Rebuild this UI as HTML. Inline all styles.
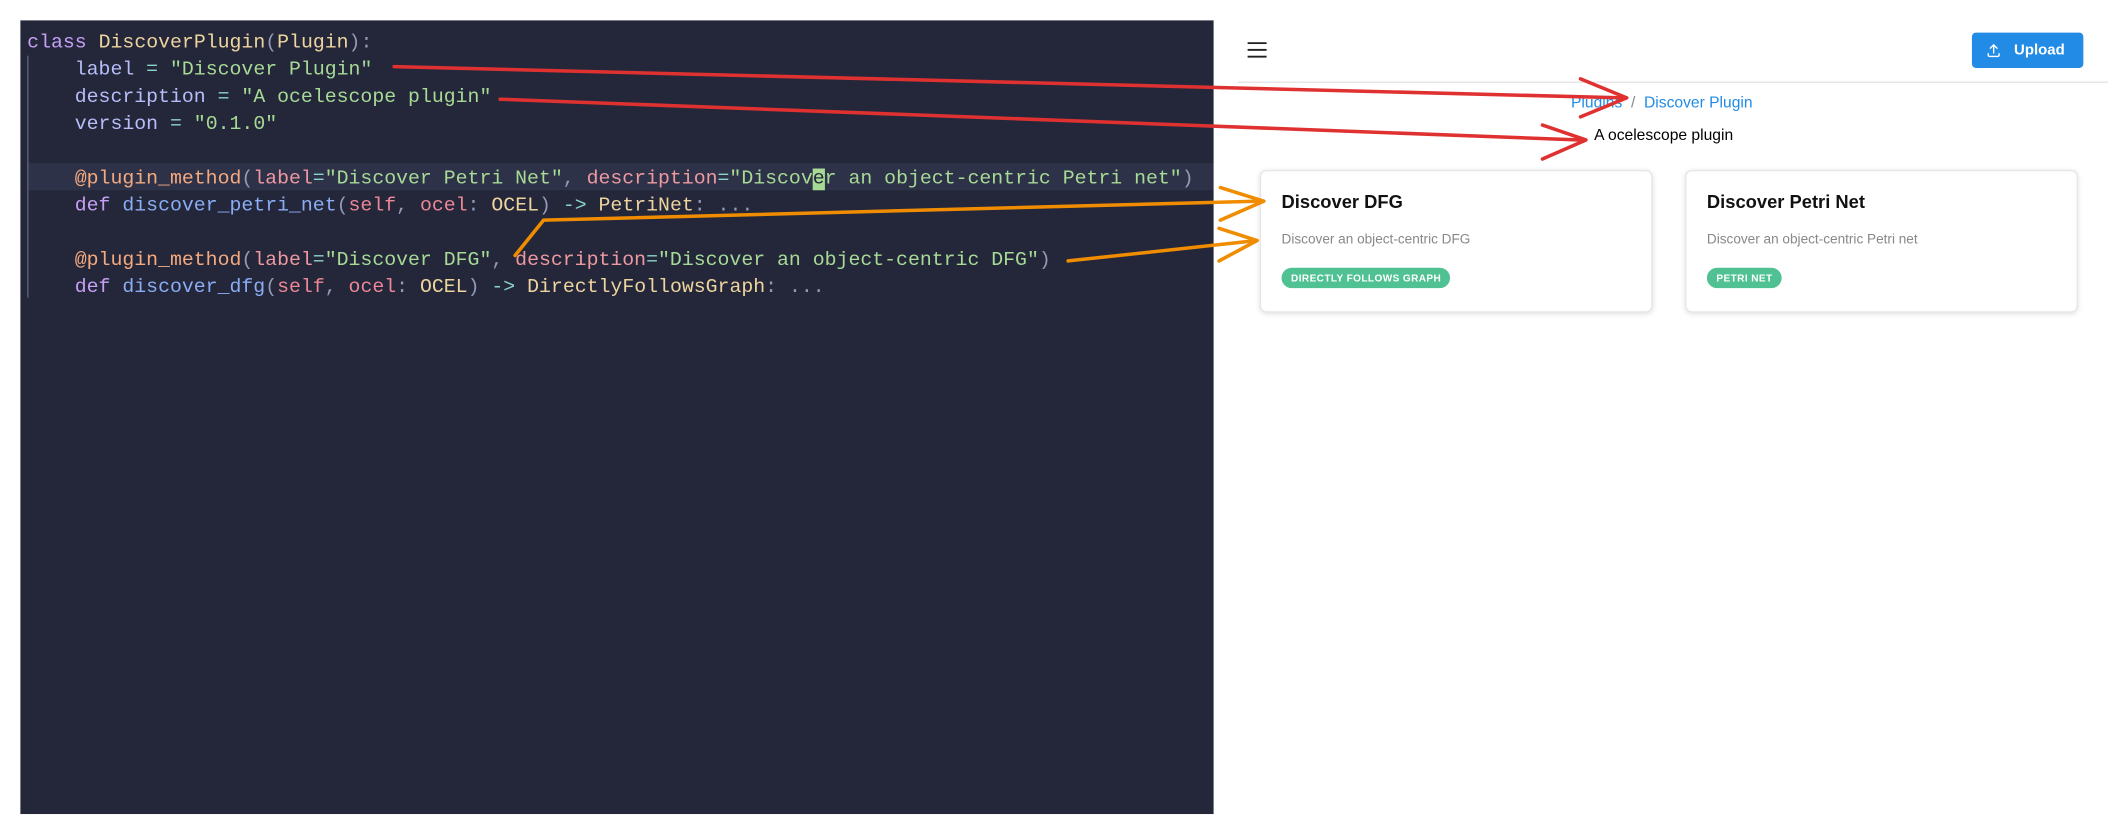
<!DOCTYPE html>
<html><head><meta charset="utf-8"><style>
html,body{margin:0;padding:0;background:#fff;width:2120px;height:830px;overflow:hidden}
#s{position:absolute;left:0;top:0;width:1560px;height:611px;transform:scale(1.359);transform-origin:0 0;font-family:"Liberation Sans",sans-serif}
#code{position:absolute;left:15px;top:15px;width:878px;height:584px;background:#24273a;overflow:hidden}
#code pre{margin:0;position:absolute;left:5px;top:7px;font-family:"Liberation Mono",monospace;font-size:14.6px;line-height:20px;color:#cad3f5}
.l{height:20px;white-space:pre}
.in{padding-left:35px}
.hl{position:absolute;left:5px;top:105px;width:873px;height:20px;background:#2e3248}
.g{position:absolute;left:5px;top:26px;width:1px;height:178px;background:#5b6078}
.k{color:#c6a0f6}.c{color:#eed49f}.p{color:#939ab7}.a{color:#b7bdf8}.s{color:#a6da95}.d{color:#f5a97f}.r{color:#ee99a0}.f{color:#8aadf4}.t{color:#8bd5ca}.sf{color:#ed8796}
.cur{background:#a6da95;color:#24273a}
.hdr{position:absolute;left:911px;top:60px;width:640px;height:1px;background:#e3e3e3}
.btn{position:absolute;left:1451px;top:23.5px;width:82px;height:26.5px;background:#228be6;border-radius:3px;color:#fff;font-weight:bold;font-size:11px;line-height:26.5px}
.card{position:absolute;top:125px;width:287px;height:103px;border:1px solid #e6e6e6;border-radius:5px;box-shadow:0 1px 4px rgba(0,0,0,.12);background:#fff}
.card h3{position:absolute;left:15px;top:15px;margin:0;font-size:13.5px;color:#111}
.card .ds{position:absolute;left:15px;top:45px;font-size:10px;color:#888}
.card .b{position:absolute;left:15px;top:71px;height:15px;padding:0 7px;border-radius:8px;background:#4fc193;color:#fff;font-size:7.4px;font-weight:bold;line-height:15px;letter-spacing:.3px}
</style></head><body><div id="s">
<div id="code"><div class="hl"></div><div class="g"></div>
<pre><div class="l"><span class="k">class</span> <span class="c">DiscoverPlugin</span><span class="p">(</span><span class="c">Plugin</span><span class="p">):</span></div><div class="l in"><span class="a">label</span> <span class="t">=</span> <span class="s">"Discover Plugin"</span></div><div class="l in"><span class="a">description</span> <span class="t">=</span> <span class="s">"A ocelescope plugin"</span></div><div class="l in"><span class="a">version</span> <span class="t">=</span> <span class="s">"0.1.0"</span></div><div class="l"> </div><div class="l in"><span class="d">@plugin_method</span><span class="p">(</span><span class="r">label</span><span class="t">=</span><span class="s">"Discover Petri Net"</span><span class="p">,</span> <span class="r">description</span><span class="t">=</span><span class="s">"Discov<span class="cur">e</span>r an object-centric Petri net"</span><span class="p">)</span></div><div class="l in"><span class="k">def</span> <span class="f">discover_petri_net</span><span class="p">(</span><span class="sf">self</span><span class="p">,</span> <span class="sf">ocel</span><span class="p">:</span> <span class="c">OCEL</span><span class="p">)</span> <span class="t">-&gt;</span> <span class="c">PetriNet</span><span class="p">: ...</span></div><div class="l"> </div><div class="l in"><span class="d">@plugin_method</span><span class="p">(</span><span class="r">label</span><span class="t">=</span><span class="s">"Discover DFG"</span><span class="p">,</span> <span class="r">description</span><span class="t">=</span><span class="s">"Discover an object-centric DFG"</span><span class="p">)</span></div><div class="l in"><span class="k">def</span> <span class="f">discover_dfg</span><span class="p">(</span><span class="sf">self</span><span class="p">,</span> <span class="sf">ocel</span><span class="p">:</span> <span class="c">OCEL</span><span class="p">)</span> <span class="t">-&gt;</span> <span class="c">DirectlyFollowsGraph</span><span class="p">: ...</span></div></pre></div>

<svg style="position:absolute;left:918px;top:31px" width="15" height="12"><rect y="0" width="14" height="1.4" fill="#222"/><rect y="5" width="14" height="1.4" fill="#222"/><rect y="10" width="14" height="1.4" fill="#222"/></svg>
<div class="btn"><svg style="position:absolute;left:10px;top:7px" width="12" height="12" viewBox="0 0 24 24" fill="none" stroke="#fff" stroke-width="2" stroke-linecap="round" stroke-linejoin="round"><path d="M4 17v2a2 2 0 0 0 2 2h12a2 2 0 0 0 2-2v-2"/><path d="M7 9l5-5 5 5"/><path d="M12 4v12"/></svg><span style="position:absolute;left:31px">Upload</span></div>
<div class="hdr"></div>
<div style="position:absolute;left:1156px;top:70px;font-size:11.5px;color:#228be6;white-space:nowrap">Plugins <span style="color:#888">&nbsp;/&nbsp;</span> Discover Plugin</div>
<div style="position:absolute;left:1173px;top:94px;font-size:11.5px;color:#000;white-space:nowrap">A ocelescope plugin</div>
<div class="card" style="left:927px"><h3>Discover DFG</h3><div class="ds">Discover an object-centric DFG</div><div class="b">DIRECTLY FOLLOWS GRAPH</div></div>
<div class="card" style="left:1240px"><h3>Discover Petri Net</h3><div class="ds">Discover an object-centric Petri net</div><div class="b">PETRI NET</div></div>

<svg style="position:absolute;left:0;top:0" width="1560" height="611" fill="none" stroke-linecap="round" stroke-linejoin="round">
<g stroke="#e03131" stroke-width="2.6">
<path d="M290 49 L1195 72"/><path d="M1163 58 L1197 72 L1163 86"/>
<path d="M368 73 L1163 103"/><path d="M1135 92 L1167 103 L1135 117"/>
</g>
<g stroke="#f08c00" stroke-width="2.6">
<path d="M379 188 L400 162 L928 148"/><path d="M898 138 L930 148 L898 162"/>
<path d="M786 192 L925 177"/><path d="M897 168 L925 177 L897 192"/>
</g></svg>
</div></body></html>
